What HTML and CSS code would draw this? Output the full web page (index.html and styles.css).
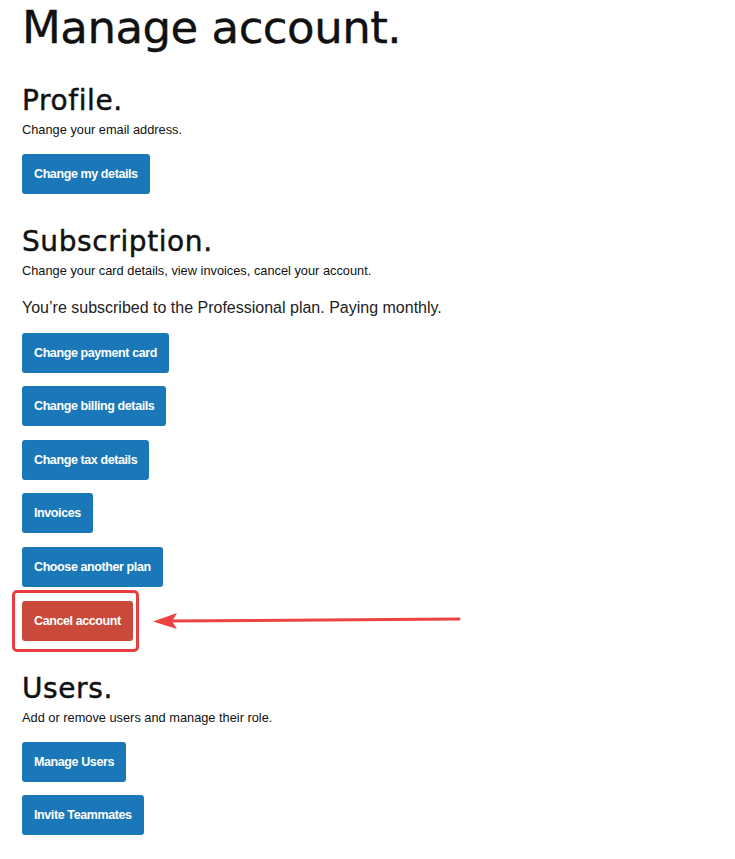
FILE: index.html
```html
<!DOCTYPE html>
<html lang="en">
<head>
<meta charset="utf-8">
<title>Manage account</title>
<link rel="stylesheet" href="styles.css">
</head>
<body>
<main class="page">
  <h1 class="title">Manage account.</h1>

  <section class="section section-first">
    <h2 class="section-title">Profile.</h2>
    <p class="desc">Change your email address.</p>
    <div class="actions">
      <a class="btn" href="#">Change my details</a>
    </div>
  </section>

  <section class="section">
    <h2 class="section-title">Subscription.</h2>
    <p class="desc">Change your card details, view invoices, cancel your account.</p>
    <p class="plan">You’re subscribed to the Professional plan. Paying monthly.</p>
    <div class="actions actions-after-plan">
      <a class="btn" href="#">Change payment card</a>
      <a class="btn" href="#">Change billing details</a>
      <a class="btn" href="#">Change tax details</a>
      <a class="btn" href="#">Invoices</a>
      <a class="btn" href="#">Choose another plan</a>
      <a class="btn btn-danger highlighted" href="#">Cancel account</a>
    </div>
  </section>

  <section class="section">
    <h2 class="section-title">Users.</h2>
    <p class="desc">Add or remove users and manage their role.</p>
    <div class="actions">
      <a class="btn" href="#">Manage Users</a>
      <a class="btn" href="#">Invite Teammates</a>
    </div>
  </section>

  <svg class="arrow" width="320" height="24" viewBox="0 0 320 24" aria-hidden="true">
    <line x1="14" y1="12" x2="309" y2="10" stroke="#ee4141" stroke-width="3" stroke-linecap="round"/>
    <polygon points="3,12.5 27,4 22,12.3 27,20" fill="#ee4141"/>
  </svg>
</main>
</body>
</html>
```
FILE: styles.css
```css
html, body {
  margin: 0;
  padding: 0;
  background: #ffffff;
}

.page {
  position: relative;
  padding: 0 0 20px 22px;
  font-family: "Liberation Sans", Arial, sans-serif;
  color: #111111;
}

.title {
  margin: 0;
  padding-top: 2px;
  font-family: "DejaVu Sans", sans-serif;
  font-weight: normal;
  font-size: 45px;
  line-height: 52px;
  letter-spacing: -0.5px;
  -webkit-text-stroke: 0.4px #111111;
  color: #111111;
}

.section-title {
  margin: 0;
  font-family: "DejaVu Sans", sans-serif;
  font-weight: normal;
  font-size: 28px;
  line-height: 32px;
  letter-spacing: 0.6px;
  -webkit-text-stroke: 0.45px #111111;
  color: #111111;
}

.section {
  margin-top: 32px;
}

.section-first {
  margin-top: 31px;
}

.desc {
  margin: 5px 0 0;
  font-size: 12.8px;
  line-height: 16px;
  color: #111111;
}

.plan {
  margin: 18.9px 0 0;
  font-size: 16px;
  line-height: 20px;
  color: #222222;
}

.actions {
  display: flex;
  flex-direction: column;
  align-items: flex-start;
  gap: 13.6px;
  margin-top: 16.2px;
}

.actions-after-plan {
  margin-top: 14.6px;
}

.btn {
  display: inline-flex;
  align-items: center;
  height: 40px;
  padding: 0 12px;
  box-sizing: border-box;
  border-radius: 3px;
  background: #1a78b9;
  color: #ffffff;
  font-size: 12.5px;
  font-weight: bold;
  letter-spacing: -0.4px;
  text-decoration: none;
}

.btn-danger {
  background: #c94a3a;
}

.highlighted {
  position: relative;
}

.highlighted::after {
  content: "";
  position: absolute;
  top: -11px;
  left: -10px;
  right: -6px;
  bottom: -11px;
  border: 3px solid #e83c3e;
  border-radius: 5px;
}

.arrow {
  position: absolute;
  left: 150px;
  top: 609px;
}
```
